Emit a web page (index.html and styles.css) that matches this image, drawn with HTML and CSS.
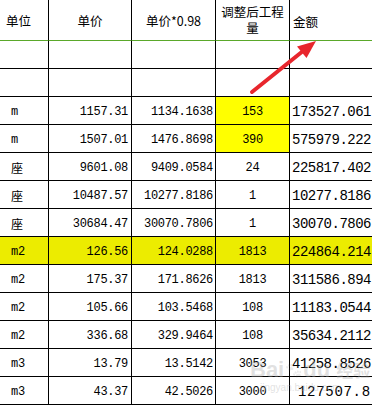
FILE: index.html
```html
<!DOCTYPE html>
<html lang="zh">
<head>
<meta charset="utf-8">
<title>工程量表</title>
<link rel="stylesheet" href="styles.css">
</head>
<body>
<div class="sheet">
  <div class="row head">
    <div class="c c1 h1">单位</div>
    <div class="c c2 hc">单价</div>
    <div class="c c3 hc">单价*0.98</div>
    <div class="c c4 hc wrap">调整后工程量</div>
    <div class="c c5 h5">金额</div>
  </div>
  <div class="row"><div class="c c1"></div><div class="c c2"></div><div class="c c3"></div><div class="c c4"></div><div class="c c5"></div></div>
  <div class="row"><div class="c c1"></div><div class="c c2"></div><div class="c c3"></div><div class="c c4"></div><div class="c c5"></div></div>
  <div class="row"><div class="c c1">m</div><div class="c c2">1157.31</div><div class="c c3">1134.1638</div><div class="c c4 yel">153</div><div class="c c5">173527.061</div></div>
  <div class="row"><div class="c c1">m</div><div class="c c2">1507.01</div><div class="c c3">1476.8698</div><div class="c c4 yel">390</div><div class="c c5">575979.222</div></div>
  <div class="row"><div class="c c1">座</div><div class="c c2">9601.08</div><div class="c c3">9409.0584</div><div class="c c4">24</div><div class="c c5">225817.402</div></div>
  <div class="row"><div class="c c1">座</div><div class="c c2">10487.57</div><div class="c c3">10277.8186</div><div class="c c4">1</div><div class="c c5">10277.8186</div></div>
  <div class="row"><div class="c c1">座</div><div class="c c2">30684.47</div><div class="c c3">30070.7806</div><div class="c c4">1</div><div class="c c5">30070.7806</div></div>
  <div class="row hl"><div class="c c1">m2</div><div class="c c2">126.56</div><div class="c c3">124.0288</div><div class="c c4">1813</div><div class="c c5">224864.214</div></div>
  <div class="row"><div class="c c1">m2</div><div class="c c2">175.37</div><div class="c c3">171.8626</div><div class="c c4">1813</div><div class="c c5">311586.894</div></div>
  <div class="row"><div class="c c1">m2</div><div class="c c2">105.66</div><div class="c c3">103.5468</div><div class="c c4">108</div><div class="c c5">11183.0544</div></div>
  <div class="row"><div class="c c1">m2</div><div class="c c2">336.68</div><div class="c c3">329.9464</div><div class="c c4">108</div><div class="c c5">35634.2112</div></div>
  <div class="row"><div class="c c1">m3</div><div class="c c2">13.79</div><div class="c c3">13.5142</div><div class="c c4">3053</div><div class="c c5">41258.8526</div></div>
  <div class="row"><div class="c c1">m3</div><div class="c c2">43.37</div><div class="c c3">42.5026</div><div class="c c4">3000</div><div class="c c5 wide">127507.8</div></div>

  <svg class="arrow" width="372" height="405" viewBox="0 0 372 405" aria-hidden="true">
    <line x1="252" y1="92" x2="303" y2="51" stroke="#e8262d" stroke-width="4" stroke-linecap="round"/>
    <polygon points="316,41 297,46.5 306.5,58" fill="#e8262d"/>
  </svg>

  <div class="mark">
    <div class="mark-top"><span class="mark-bd">Bai</span><span class="paw">🐾</span><span class="mark-bd">du</span><span class="mark-jy">经验</span></div>
    <div class="mark-url">jingyan.baidu.com</div>
  </div>
</div>
</body>
</html>
```

FILE: styles.css
```css
html, body {
  margin: 0;
  padding: 0;
  background: #fff;
}

.sheet {
  position: relative;
  width: 372px;
  height: 405px;
  overflow: hidden;
  font-family: "Liberation Mono", "Noto Sans CJK SC", monospace;
  color: #000;
}

.row {
  display: grid;
  grid-template-columns: 49px 83px 84px 74px 90px;
  height: 28px;
}

.row.head {
  height: 41px;
}

.c {
  box-sizing: border-box;
  border-right: 1px solid #000;
  border-bottom: 1px solid #000;
  display: flex;
  align-items: center;
  white-space: nowrap;
  overflow: hidden;
  font-size: 12px;
  letter-spacing: -0.3px;
  padding-top: 2px;
}

.head .c {
  border-bottom-color: #5aa82a;
  font-family: "Noto Sans CJK SC", "Liberation Mono", sans-serif;
  font-size: 12.5px;
  letter-spacing: 0;
  padding-top: 0;
}

.c1 { padding-left: 11px; }
.c2 { justify-content: flex-end; padding-right: 3px; }
.c3 { justify-content: flex-end; padding-right: 2px; }
.c4 { justify-content: center; }
.c5 {
  border-right: none;
  padding-left: 2px;
  font-size: 14px;
  letter-spacing: -0.5px;
}

.head .h1 { padding-left: 6px; }
.head .hc { justify-content: center; padding-right: 0; padding-left: 0; }
.head .h5 { padding-left: 3px; font-size: 12.5px; padding-top: 3px; }

.head .wrap {
  white-space: normal;
  text-align: center;
  line-height: 16px;
  padding: 0 4px;
}

.c5.wide {
  padding-left: 8px;
  letter-spacing: 0.7px;
}

.yel { background: #ffff00; }
.row.hl .c { background: #ecec00; }

.arrow {
  position: absolute;
  left: 0;
  top: 0;
  pointer-events: none;
}

.mark {
  position: absolute;
  left: 250px;
  top: 358px;
  color: rgba(170, 170, 170, 0.35);
  font-family: "Liberation Sans", "Noto Sans CJK SC", sans-serif;
  pointer-events: none;
}

.mark-top {
  display: flex;
  align-items: center;
  font-size: 22px;
  font-weight: bold;
  line-height: 24px;
}

.paw {
  font-size: 14px;
  filter: grayscale(1);
  opacity: 0.35;
  margin: 0 1px;
}

.mark-jy {
  font-family: "Noto Sans CJK SC", sans-serif;
  font-size: 17px;
  margin-left: 6px;
}

.mark-url {
  font-size: 10px;
  margin-left: 10px;
  line-height: 12px;
}
```
